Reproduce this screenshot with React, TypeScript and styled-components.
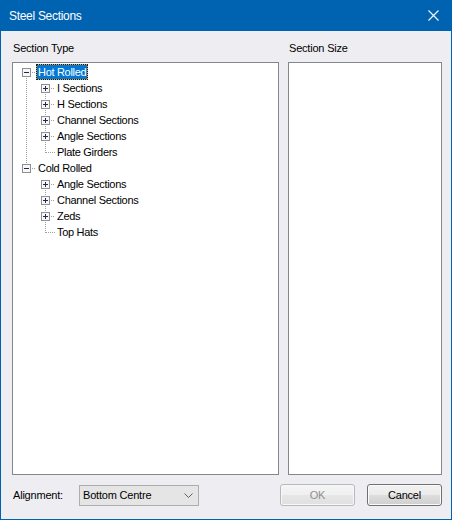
import React from "react";
import styled, { createGlobalStyle } from "styled-components";

const Global = createGlobalStyle`
  html, body { margin: 0; padding: 0; background: #ffffff; }
  * { box-sizing: border-box; }
`;

const Window = styled.div`
  width: 452px;
  height: 520px;
  border: 1px solid #0063b1;
  border-top: none;
  display: flex;
  flex-direction: column;
  background: #eeeef2;
  font-family: "Liberation Sans", Arial, sans-serif;
  font-size: 11px;
  letter-spacing: -0.2px;
  color: #000;
`;

const TitleBar = styled.div`
  height: 31px;
  flex: none;
  background: #0063b1;
  display: flex;
  align-items: center;
  justify-content: space-between;
  padding: 0 8px 0 8px;
  color: #fff;
  font-size: 12px;
  letter-spacing: -0.3px;
`;

const CloseBtn = styled.div`
  width: 20px;
  height: 20px;
  display: flex;
  align-items: center;
  justify-content: center;
`;

const Body = styled.div`
  flex: 1;
  display: flex;
  flex-direction: column;
  padding: 9px 9px 12px 11px;
`;

const PanelGrid = styled.div`
  display: grid;
  grid-template-columns: 267px 154px;
  grid-template-rows: 16px 413px;
  column-gap: 9px;
  row-gap: 6px;
`;

const Label = styled.div<{ $indent?: number }>`
  line-height: 16px;
  padding-left: ${(p) => p.$indent ?? 0}px;
`;

const ListBox = styled.div`
  background: #ffffff;
  border: 1px solid #828790;
  overflow: hidden;
`;

const Tree = styled.div`
  display: flex;
  flex-direction: column;
  padding: 1px 0 0 4px;
  font-size: 11px;
  letter-spacing: -0.3px;
`;

const Row = styled.div`
  display: flex;
  align-items: center;
  height: 16px;
`;

const Node = styled.span<{ $selected?: boolean }>`
  display: inline-block;
  height: 16px;
  line-height: 14px;
  padding: 0 1px;
  border: 1px dotted ${(p) => (p.$selected ? "#1a1a1a" : "transparent")};
  color: ${(p) => (p.$selected ? "#ffffff" : "#000000")};
  background: ${(p) =>
    p.$selected
      ? "linear-gradient(#0078d7, #0078d7) padding-box, linear-gradient(#f0a23a, #f0a23a) border-box"
      : "transparent"};
  white-space: nowrap;
`;

const Footer = styled.div`
  display: flex;
  align-items: center;
  margin-top: 9px;
  height: 22px;
  padding-left: 1px;
`;

const FooterLabel = styled.div`
  width: 66px;
`;

const Combo = styled.div`
  width: 120px;
  height: 21px;
  border: 1px solid #adadad;
  background: #e5e5e5;
  display: flex;
  align-items: center;
  justify-content: space-between;
  padding: 0 5px 0 3px;
`;

const Buttons = styled.div`
  margin-left: auto;
  display: flex;
  gap: 12px;
  margin-right: 0;
`;

const Button = styled.div<{ $disabled?: boolean }>`
  width: 75px;
  height: 22px;
  border-radius: 3px;
  border: 1px solid ${(p) => (p.$disabled ? "#b5b9bd" : "#707070")};
  display: flex;
  align-items: center;
  justify-content: center;
  color: ${(p) => (p.$disabled ? "#8f8f8f" : "#000")};
  background: ${(p) =>
    p.$disabled
      ? "linear-gradient(#f4f4f4 0%, #f0f0f0 48%, #e6e6e6 52%, #e0e0e0 100%)"
      : "linear-gradient(#f2f2f2 0%, #ebebeb 48%, #dddddd 52%, #cfcfcf 100%)"};
  box-shadow: inset 0 0 0 1px ${(p) => (p.$disabled ? "#f8f8f8" : "#fbfbfb")};
`;

type Cell = "none" | "pipe" | "tee" | "elbow" | "boxTop" | "boxMid" | "boxLast";

const DOT = "#a0a0a0";

function TreeCell({ kind, open }: { kind: Cell; open?: boolean }) {
  const hasBox = kind === "boxTop" || kind === "boxMid" || kind === "boxLast";
  return (
    <svg width="19" height="16" viewBox="0 0 19 16" shapeRendering="crispEdges" style={{ flex: "none", display: "block" }}>
      {(kind === "pipe" || kind === "tee") && (
        <line x1="9.5" y1="0" x2="9.5" y2="16" stroke={DOT} strokeDasharray="1 1" />
      )}
      {kind === "elbow" && (
        <line x1="9.5" y1="0" x2="9.5" y2="9" stroke={DOT} strokeDasharray="1 1" />
      )}
      {(kind === "tee" || kind === "elbow") && (
        <line x1="10" y1="8.5" x2="19" y2="8.5" stroke={DOT} strokeDasharray="1 1" />
      )}
      {hasBox && (
        <>
          {(kind === "boxMid" || kind === "boxLast") && (
            <line x1="9.5" y1="0" x2="9.5" y2="4" stroke={DOT} strokeDasharray="1 1" />
          )}
          {(kind === "boxTop" || kind === "boxMid") && (
            <line x1="9.5" y1="14" x2="9.5" y2="16" stroke={DOT} strokeDasharray="1 1" />
          )}
          <line x1="15" y1="8.5" x2="19" y2="8.5" stroke={DOT} strokeDasharray="1 1" />
          <rect x="5.5" y="4.5" width="8" height="8" fill="#f7f7f7" stroke="#8f8f8f" />
          <rect x="7" y="8" width="5" height="1" fill="#1e2a55" />
          {!open && <rect x="9" y="6" width="1" height="5" fill="#1e2a55" />}
        </>
      )}
    </svg>
  );
}

type Item = { cells: { kind: Cell; open?: boolean }[]; text: string; selected?: boolean };

const items: Item[] = [
  { cells: [{ kind: "boxTop", open: true }], text: "Hot Rolled", selected: true },
  { cells: [{ kind: "pipe" }, { kind: "boxTop" }], text: "I Sections" },
  { cells: [{ kind: "pipe" }, { kind: "boxMid" }], text: "H Sections" },
  { cells: [{ kind: "pipe" }, { kind: "boxMid" }], text: "Channel Sections" },
  { cells: [{ kind: "pipe" }, { kind: "boxMid" }], text: "Angle Sections" },
  { cells: [{ kind: "pipe" }, { kind: "elbow" }], text: "Plate Girders" },
  { cells: [{ kind: "boxLast", open: true }], text: "Cold Rolled" },
  { cells: [{ kind: "none" }, { kind: "boxTop" }], text: "Angle Sections" },
  { cells: [{ kind: "none" }, { kind: "boxMid" }], text: "Channel Sections" },
  { cells: [{ kind: "none" }, { kind: "boxMid" }], text: "Zeds" },
  { cells: [{ kind: "none" }, { kind: "elbow" }], text: "Top Hats" },
];

export default function App() {
  return (
    <>
      <Global />
      <Window>
        <TitleBar>
          <span>Steel Sections</span>
          <CloseBtn>
            <svg width="11" height="11" viewBox="0 0 11 11">
              <path d="M0.5 0.5 L10.5 10.5 M10.5 0.5 L0.5 10.5" stroke="#fff" strokeWidth="1.1" />
            </svg>
          </CloseBtn>
        </TitleBar>
        <Body>
          <PanelGrid>
            <Label $indent={1}>Section Type</Label>
            <Label $indent={1}>Section Size</Label>
            <ListBox>
              <Tree>
                {items.map((it, i) => (
                  <Row key={i}>
                    {it.cells.map((c, j) => (
                      <TreeCell key={j} kind={c.kind} open={c.open} />
                    ))}
                    <Node $selected={it.selected}>{it.text}</Node>
                  </Row>
                ))}
              </Tree>
            </ListBox>
            <ListBox />
          </PanelGrid>
          <Footer>
            <FooterLabel>Alignment:</FooterLabel>
            <Combo>
              <span>Bottom Centre</span>
              <svg width="9" height="5" viewBox="0 0 9 5">
                <path d="M0.5 0.5 L4.5 4.5 L8.5 0.5" stroke="#606060" fill="none" strokeWidth="1" />
              </svg>
            </Combo>
            <Buttons>
              <Button $disabled>OK</Button>
              <Button>Cancel</Button>
            </Buttons>
          </Footer>
        </Body>
      </Window>
    </>
  );
}
